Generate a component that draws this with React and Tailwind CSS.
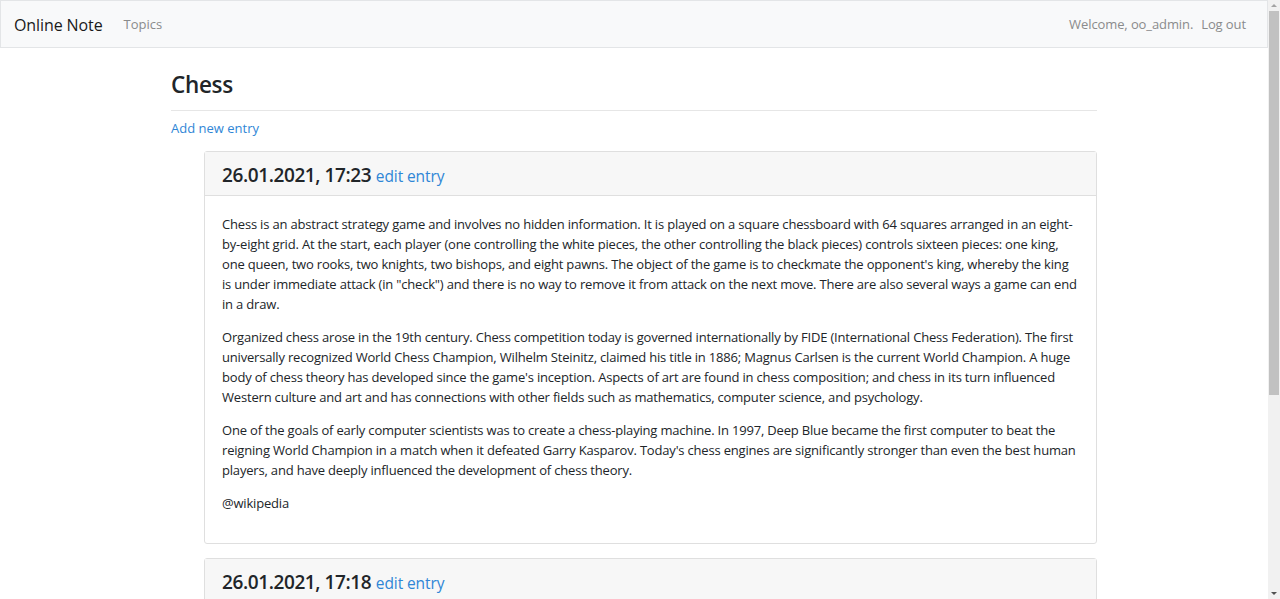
const entries = [
    {
        id: 1,
        date: '26.01.2021, 17:23',
        paragraphs: [
            'Chess is an abstract strategy game and involves no hidden information. It is played on a square chessboard with 64 squares arranged in an eight-by-eight grid. At the start, each player (one controlling the white pieces, the other controlling the black pieces) controls sixteen pieces: one king, one queen, two rooks, two knights, two bishops, and eight pawns. The object of the game is to checkmate the opponent\'s king, whereby the king is under immediate attack (in "check") and there is no way to remove it from attack on the next move. There are also several ways a game can end in a draw.',
            'Organized chess arose in the 19th century. Chess competition today is governed internationally by FIDE (International Chess Federation). The first universally recognized World Chess Champion, Wilhelm Steinitz, claimed his title in 1886; Magnus Carlsen is the current World Champion. A huge body of chess theory has developed since the game\'s inception. Aspects of art are found in chess composition; and chess in its turn influenced Western culture and art and has connections with other fields such as mathematics, computer science, and psychology.',
            'One of the goals of early computer scientists was to create a chess-playing machine. In 1997, Deep Blue became the first computer to beat the reigning World Champion in a match when it defeated Garry Kasparov. Today\'s chess engines are significantly stronger than even the best human players, and have deeply influenced the development of chess theory.',
            '@wikipedia',
        ],
    },
    {
        id: 2,
        date: '26.01.2021, 17:18',
        paragraphs: [
            'Chess is a two-player strategy board game played on a checkered board with 64 squares arranged in an 8×8 grid.',
            '@wikipedia',
        ],
    },
];

function Entry({ entry }) {
    return (
        <div className="ml-[33px] mb-[14px] border border-[#dfdfdf] rounded-[3px] bg-white">
            <div className="bg-[#f7f7f7] border-b border-[#dfdfdf] px-[17px] pt-[3px] h-[44px] flex items-center">
                <h4 className="text-[19px] font-semibold tracking-[-0.4px] leading-none text-[#212529]">
                    {entry.date}{' '}
                    <a href="#" className="text-[15.5px] font-normal tracking-[-0.1px] text-[#2f86d6]">edit entry</a>
                </h4>
            </div>
            <div className="px-[17px] pt-[18px] pb-[17px]">
                {entry.paragraphs.map((p, i) => (
                    <p key={i} className="mb-[13px] text-[13px] tracking-[-0.185px] leading-[20px] text-[#212529]">{p}</p>
                ))}
            </div>
        </div>
    );
}

function Scrollbar() {
    return (
        <div className="w-[12px] shrink-0 bg-[#f1f1f1] flex flex-col items-center">
            <div className="h-[11px] flex items-center justify-center">
                <div className="w-0 h-0 border-l-[3px] border-r-[3px] border-b-[3px] border-l-transparent border-r-transparent border-b-[#a3a3a3]" />
            </div>
            <div className="w-[10px] h-[384px] bg-[#c1c1c1]" />
            <div className="flex-1" />
            <div className="h-[11px] flex items-center justify-center">
                <div className="w-0 h-0 border-l-[3px] border-r-[3px] border-t-[3px] border-l-transparent border-r-transparent border-t-[#505050]" />
            </div>
        </div>
    );
}

export default function App() {
    return (
        <div className="h-screen flex overflow-hidden bg-white text-[#212529]" style={{ fontFamily: '"Segoe UI", "Open Sans", sans-serif' }}>
            <div className="flex-1 min-w-0">
                {/* Navbar */}
                <nav className="h-[48px] bg-[#f8f9fa] border border-[#e3e5e7] flex items-center justify-between px-[13px] pt-[2px]">
                    <div className="flex items-center">
                        <a href="#" className="text-[16px] tracking-[-0.1px] text-[#1a1a1a] mr-[21px]">Online Note</a>
                        <a href="#" className="text-[13px] text-[#8a8b8c]">Topics</a>
                    </div>
                    <div className="flex items-center gap-[8px] text-[13px] tracking-[-0.1px] text-[#8a8b8c] pr-[8px]">
                        <span>Welcome, oo_admin.</span>
                        <a href="#">Log out</a>
                    </div>
                </nav>

                {/* Content */}
                <div className="max-w-[926px] mx-auto pt-[22px]">
                    <h3 className="text-[22.5px] font-semibold tracking-[-0.3px] leading-[30px] mb-[10px]">Chess</h3>
                    <hr className="border-t border-[#e6e6e6] mb-[7px]" />
                    <a href="#" className="block text-[13px] leading-[20px] text-[#2f86d6] mb-[13px]">Add new entry</a>
                    {entries.map(e => <Entry key={e.id} entry={e} />)}
                </div>
            </div>
            <Scrollbar />
        </div>
    );
}
